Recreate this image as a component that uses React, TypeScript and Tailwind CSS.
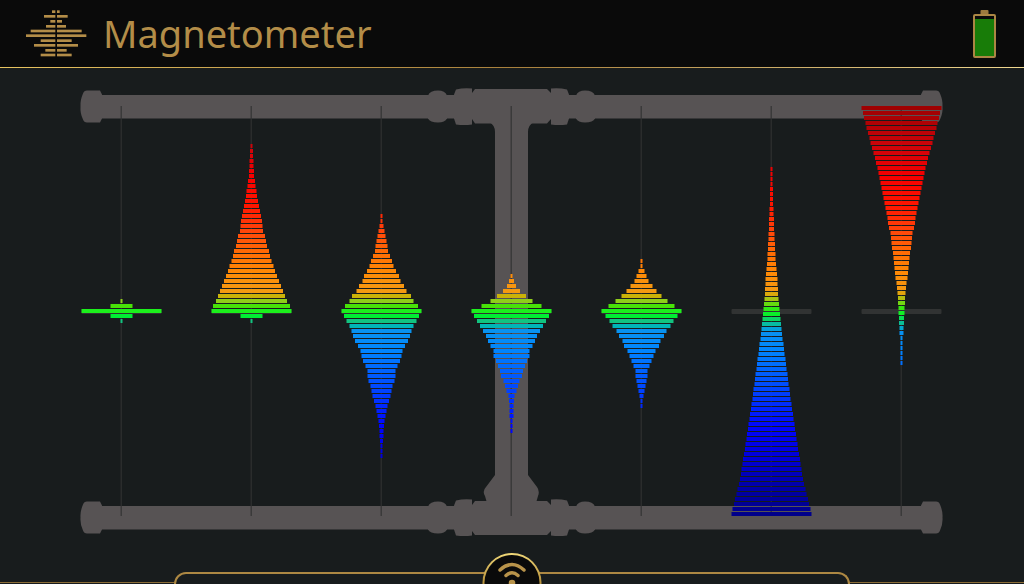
import React from 'react';

interface Column {
  x: number;
  // top edge of the first bar, bars then follow every 5 units
  top: number;
  widths: number[];
}

const BAR_STEP = 5;
const BAR_HEIGHT = 4;
const CENTER = 309;

// [y, colour] stops of the scale, red is strong positive, blue strong negative
const SCALE: [number, [number, number, number]][] = [
  [104, [155, 0, 0]],
  [144, [205, 4, 10]],
  [174, [245, 0, 0]],
  [204, [255, 22, 0]],
  [229, [255, 70, 10]],
  [249, [255, 105, 5]],
  [269, [255, 135, 5]],
  [289, [244, 154, 18]],
  [294, [202, 178, 8]],
  [299, [144, 206, 26]],
  [304, [72, 226, 8]],
  [309, [28, 240, 28]],
  [314, [0, 238, 52]],
  [319, [18, 196, 128]],
  [324, [0, 182, 184]],
  [329, [8, 146, 240]],
  [349, [0, 132, 255]],
  [369, [0, 98, 255]],
  [399, [0, 50, 255]],
  [424, [0, 6, 255]],
  [454, [0, 0, 220]],
  [484, [0, 0, 170]],
  [516, [0, 0, 135]],
];

const centered = (x: number, up: number[], down: number[]): Column => ({
  x,
  top: CENTER - up.length * BAR_STEP,
  widths: [...[...up].reverse(), 80, ...down],
});

const profile = (x: number, top: number, count: number, points: [number, number][]): Column => {
  const widths = Array.from({ length: count }, (_, i) => {
    const y = top + i * BAR_STEP;
    const next = points.findIndex(([py]) => py >= y);
    if (next === -1) return points[points.length - 1][1];
    if (next === 0) return points[0][1];
    const [y0, w0] = points[next - 1];
    const [y1, w1] = points[next];
    return Math.round(w0 + ((w1 - w0) * (y - y0)) / (y1 - y0));
  });
  return { x, top, widths };
};

const COLUMNS: Column[] = [
  centered(121.5, [22, 2], [22, 2]),
  centered(
    251.5,
    [77, 71, 67, 63, 59, 55, 51, 47, 44, 40, 37, 35, 31, 29, 27, 23, 22, 21, 19, 17, 15, 13, 11, 10, 8, 7, 5, 5, 4, 4, 3, 3, 2],
    [22, 2]
  ),
  centered(
    381.5,
    [73, 64, 59, 50, 45, 38, 35, 29, 24, 21, 17, 13, 12, 10, 8, 6, 4, 2, 2],
    [75, 70, 64, 60, 57, 53, 47, 42, 40, 37, 32, 28, 28, 26, 22, 20, 18, 15, 12, 10, 8, 6, 5, 4, 4, 3, 2, 2, 2]
  ),
  centered(
    511.5,
    [60, 42, 29, 17, 9, 5, 2],
    [75, 69, 63, 57, 51, 47, 42, 36, 36, 31, 27, 23, 21, 16, 13, 10, 6, 5, 4, 4, 4, 2, 2, 2]
  ),
  centered(
    641.5,
    [66, 52, 40, 30, 22, 14, 10, 6, 2, 2],
    [72, 64, 58, 50, 45, 38, 35, 28, 24, 20, 16, 12, 12, 10, 8, 6, 4, 2, 2]
  ),
  profile(771.5, 167, 70, [
    [167, 2], [200, 3], [205, 4], [235, 6], [255, 8], [270, 11], [290, 13], [311, 17],
    [330, 21], [340, 23], [370, 31], [400, 39], [440, 51], [480, 64], [512, 80],
  ]),
  profile(901.5, 106, 52, [
    [106, 80], [127, 69], [150, 57], [160, 51], [180, 42], [200, 34], [220, 27], [232, 22],
    [252, 17], [275, 12], [290, 8], [305, 6], [330, 4], [336, 2], [361, 2],
  ]),
];

const LOGO_ROWS: [number, number, number][] = [
  [35, 111, 134],
  [49, 87, 158],
  [64, 106, 141],
  [79, 93, 153],
  [93, 47, 200],
  [107, 33, 214],
  [122, 77, 170],
  [136, 57, 189],
  [151, 91, 155],
  [165, 77, 170],
];

const barColor = (y: number) => {
  const next = SCALE.findIndex(([sy]) => sy >= y);
  if (next <= 0) return `rgb(${SCALE[0][1].join(',')})`;
  const [y0, c0] = SCALE[next - 1];
  const [y1, c1] = SCALE[next];
  const t = (y - y0) / (y1 - y0);
  return `rgb(${c0.map((c, i) => Math.round(c + (c1[i] - c) * t)).join(',')})`;
};

const Logo = () => (
  <svg viewBox="30 30 186 141" className="w-[62px] h-[47px]" fill="#b38d48" aria-hidden="true">
    {LOGO_ROWS.map(([y, left, right]) => (
      <React.Fragment key={y}>
        <rect x={left} y={y - 4} width={121 - left} height={8} />
        <rect x={126} y={y - 4} width={right - 126} height={8} />
      </React.Fragment>
    ))}
  </svg>
);

const Battery = () => (
  <svg viewBox="0 0 23 48" className="w-[23px] h-12" role="img" aria-label="Battery">
    <rect x="7.500" y="0" width="8" height="5" rx="1" fill="#9c7a3e" />
    <rect x="1" y="5" width="21" height="42" rx="1" fill="#0a0a0a" stroke="#ab8644" strokeWidth="2" />
    <rect x="2" y="9" width="19" height="37" fill="#187c08" />
  </svg>
);

const Pipe = ({ y }: { y: number }) => (
  <g transform={`translate(0 ${y})`}>
    <rect x="90" y="-11.5" width="840" height="23.5" />
    <path d="M102-12 L100-16 H87 Q84-16 83-13 Q80-6 80.500 0 Q80 7 83 13 Q84 16 87 16 H100 L102 12Z" />
    <path d="M921-12 L923-16 H936 Q939-16 940-13 Q943-6 942.500 0 Q943 7 940 13 Q939 16 936 16 H923 L921 12Z" />
    <path d="M428-11 Q430-16 438-16 Q445-16 447-11 V12 Q445 16 438 16 Q430 16 428 12Z" />
    <path d="M576-11 Q578-16 585-16 Q593-16 595-11 V12 Q593 16 585 16 Q578 16 576 12Z" />
    <path d="M454-12 L456-17 Q464-19 472-18 V18 Q464 19 456 18 L454 12Z" />
    <path d="M569-12 L567-17 Q559-19 551-18 V18 Q559 19 567 18 L569 12Z" />
  </g>
);

const FieldChart = () => (
  <svg viewBox="0 68 1024 504" className="block w-full shrink-0" role="img" aria-label="Magnetic field readings">
    <g fill="#575354">
      <Pipe y={106.5} />
      <Pipe y={517.5} />
      <path d="M472 93 L475 89 H547 L551 93 V119 L547 123.500 H475 L472 119Z" />
      <path d="M472 505 L475 501 H547 L551 505 V531 L547 535 H475 L472 531Z" />
      <path d="M489 122 Q495 125 495 132 V475 L486 487 Q482 491 485 496 L487 503 H536 L538 496 Q540 491 537 487 L528 475 V132 Q528 125 534 122Z" />
    </g>

    {COLUMNS.map(({ x }) => (
      <React.Fragment key={x}>
        <rect x={x - 40} y={CENTER} width="80" height="5" rx="1" fill="#313333" />
        <rect x={x - 1} y="106" width="1.500" height="410" fill="#303132" fillOpacity="0.75" />
      </React.Fragment>
    ))}

    {COLUMNS.map(({ x, top, widths }) => (
      <g key={x}>
        {widths.map((w, i) => {
          const y = top + i * BAR_STEP;
          return <rect key={y} x={x - w / 2} y={y} width={w} height={BAR_HEIGHT} fill={barColor(y)} />;
        })}
      </g>
    ))}
  </svg>
);

const Footer = () => (
  <footer className="relative mt-auto flex h-14 shrink-0 justify-center">
    <div className="mt-[10px] flex-1 border-t border-[#8a6c36]" />
    <div className="w-[66%] rounded-t-xl border-2 border-b-0 border-[#ad8843]" />
    <div className="mt-[10px] flex-1 border-t border-[#8a6c36]" />
    <button
      type="button"
      aria-label="Wireless connection"
      className="absolute -top-[19px] left-1/2 size-[59px] -translate-x-1/2 rounded-full bg-linear-to-b from-[#f0d878] via-[#b8923c] to-[#8a6c36] p-[2px]"
    >
      <span className="flex size-full justify-center rounded-full bg-[#0a0a0a] pt-[7px]">
        <svg
          viewBox="0 0 30 26"
          className="h-[26px] w-[30px]"
          fill="none"
          stroke="#b8934a"
          strokeWidth="3.500"
          strokeLinecap="round"
        >
          <path d="M2.500 8 Q14.500-3 26.500 8" />
          <path d="M8.500 13.500 Q14.500 8 20.500 13.500" />
          <circle cx="14.500" cy="21" r="3.300" fill="#b8934a" stroke="none" />
        </svg>
      </span>
    </button>
  </footer>
);

export default function App() {
  return (
    <div className="flex h-screen flex-col overflow-hidden bg-[#181c1d]">
      <header className="shrink-0 bg-[#0a0a0a]">
        <div className="flex h-[67px] items-center pl-[25px] pr-7">
          <Logo />
          <h1 className="ml-4 flex-1 pb-0.5 font-['Noto_Sans',sans-serif] text-[38px] leading-none text-[#b38d48]">
            Magnetometer
          </h1>
          <Battery />
        </div>
        <div className="h-px bg-linear-to-r from-[#e8c460] via-[#a8803c] to-[#f0d890]" />
      </header>
      <FieldChart />
      <Footer />
    </div>
  );
}
